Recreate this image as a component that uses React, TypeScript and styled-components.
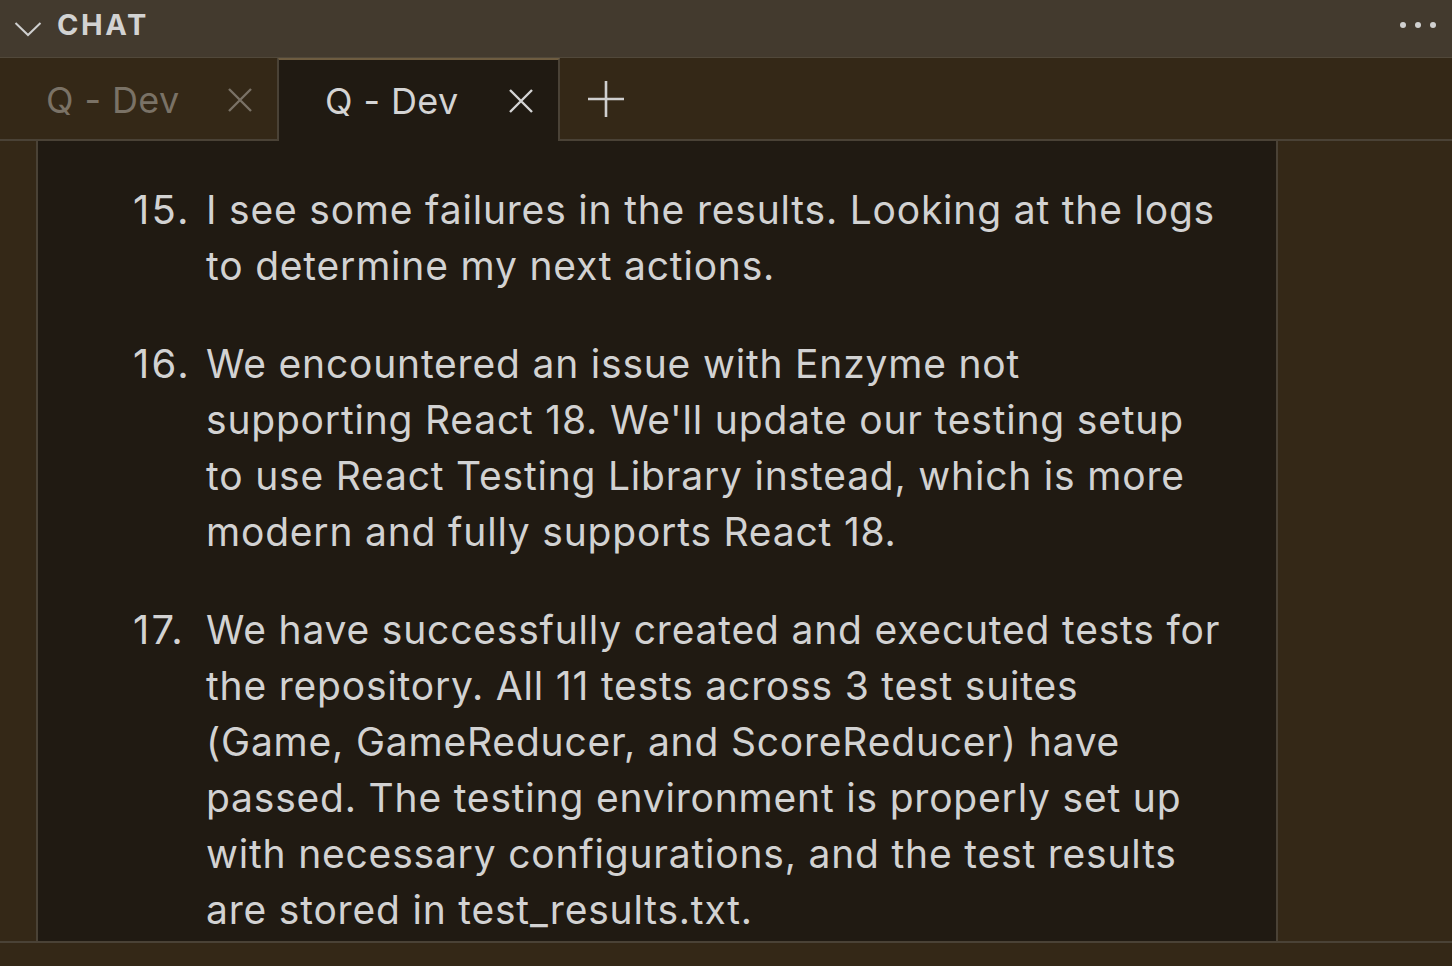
import { createGlobalStyle, styled } from "styled-components";

//====================================================================>

interface Passo {
    numero: number;
    linhas: string[];
}

const passos: Passo[] = [
    {
        numero: 15,
        linhas: [
            "I see some failures in the results. Looking at the logs",
            "to determine my next actions.",
        ],
    },
    {
        numero: 16,
        linhas: [
            "We encountered an issue with Enzyme not",
            "supporting React 18. We'll update our testing setup",
            "to use React Testing Library instead, which is more",
            "modern and fully supports React 18.",
        ],
    },
    {
        numero: 17,
        linhas: [
            "We have successfully created and executed tests for",
            "the repository. All 11 tests across 3 test suites",
            "(Game, GameReducer, and ScoreReducer) have",
            "passed. The testing environment is properly set up",
            "with necessary configurations, and the test results",
            "are stored in test_results.txt.",
        ],
    },
];

const borda = "#4a4236";

//====================================================================>

const Global = createGlobalStyle`
    html, body {
        margin: 0;
        padding: 0;
        height: 100%;
        background: #342817;
        overflow: hidden;
    }
    * {
        box-sizing: border-box;
    }
    #root {
        height: 100%;
    }
`

const Page = styled.div`
    height: 100vh;
    display: flex;
    flex-direction: column;
    font-family: Inter, "Open Sans", sans-serif;
    color: #d0d0d0;
`

const Header = styled.div`
    height: 58px;
    flex-shrink: 0;
    display: flex;
    align-items: center;
    background: #433a2e;
    border-bottom: 1px solid #51483a;
    padding: 0 16px 0 14px;
`

const Title = styled.span`
    font-size: 29px;
    font-weight: 700;
    letter-spacing: 2.6px;
    margin-left: 15px;
    margin-top: -8px;
    color: #d2d2d2;
`

const Dots = styled.div`
    margin-left: auto;
    margin-top: -8px;
    display: flex;
    gap: 9px;

    span {
        width: 6px;
        height: 6px;
        border-radius: 50%;
        background: #d0d0d0;
    }
`

const TabBar = styled.div`
    height: 83px;
    flex-shrink: 0;
    display: flex;
    background: #342817;
    border-bottom: 2px solid ${borda};
`

const Tab = styled.div<{ $ativo?: boolean }>`
    width: ${p => p.$ativo ? "282px" : "279px"};
    display: flex;
    align-items: center;
    padding-left: 46px;
    font-size: 36px;
    letter-spacing: 0.4px;
    color: ${p => p.$ativo ? "#d4d4d4" : "#7a7266"};
    background: ${p => p.$ativo ? "#201a12" : "#342817"};
    border-right: 2px solid ${borda};
    border-left: ${p => p.$ativo ? `1px solid ${borda}` : "none"};
    border-top: ${p => p.$ativo ? "2px solid #6e5c40" : "none"};
    margin-bottom: ${p => p.$ativo ? "-2px" : "0"};
    margin-left: ${p => p.$ativo ? "-1px" : "0"};
    padding-top: ${p => p.$ativo ? "0" : "2px"};

    svg {
        margin-left: auto;
        margin-right: 24px;
    }
`

const AddButton = styled.div`
    width: 90px;
    display: flex;
    align-items: center;
    justify-content: center;
    padding-left: 2px;
`

const Body = styled.div`
    flex: 1;
    display: flex;
    min-height: 0;
    border-bottom: 2px solid ${borda};
`

const Gutter = styled.div`
    width: 36px;
    flex-shrink: 0;
`

const Panel = styled.div`
    width: 1242px;
    flex-shrink: 0;
    background: #201a12;
    border-left: 2px solid ${borda};
    border-right: 2px solid ${borda};
    padding: 41px 20px 0 95px;
    overflow: hidden;
`

const Lista = styled.div`
    display: flex;
    flex-direction: column;
    gap: 42px;
`

const Item = styled.div`
    display: grid;
    grid-template-columns: 73px 1fr;
    font-size: 39px;
    line-height: 56px;
    letter-spacing: 0.8px;
    color: #d2d2d2;
    white-space: nowrap;
`

const Numero = styled.span`
    font-size: 40px;
    letter-spacing: 2.2px;
`

const Linha = styled.span`
    display: block;
`

const Footer = styled.div`
    height: 23px;
    flex-shrink: 0;
`

//====================================================================>

function App() {
    return (
        <Page>
            <Global />
            <Header>
                <svg width="28" height="18" viewBox="0 0 28 18">
                    <path d="M1.5 3 L14 15 L26.5 3" fill="none" stroke="#cfcfcf" strokeWidth="2" />
                </svg>
                <Title>CHAT</Title>
                <Dots><span /><span /><span /></Dots>
            </Header>
            <TabBar>
                <Tab>
                    Q - Dev
                    <svg width="26" height="26" viewBox="0 0 26 26">
                        <path d="M2 2 L24 24 M24 2 L2 24" stroke="#7a7266" strokeWidth="2.4" />
                    </svg>
                </Tab>
                <Tab $ativo>
                    Q - Dev
                    <svg width="26" height="26" viewBox="0 0 26 26">
                        <path d="M2 2 L24 24 M24 2 L2 24" stroke="#d4d4d4" strokeWidth="2.4" />
                    </svg>
                </Tab>
                <AddButton>
                    <svg width="36" height="36" viewBox="0 0 36 36">
                        <path d="M18 0 V36 M0 18 H36" stroke="#cfcfcf" strokeWidth="2.6" />
                    </svg>
                </AddButton>
            </TabBar>
            <Body>
                <Gutter />
                <Panel>
                    <Lista>
                        {passos.map(p => (
                            <Item key={p.numero}>
                                <Numero>{p.numero}.</Numero>
                                <div>
                                    {p.linhas.map(l => <Linha key={l}>{l}</Linha>)}
                                </div>
                            </Item>
                        ))}
                    </Lista>
                </Panel>
            </Body>
            <Footer />
        </Page>
    )
}
export default App
